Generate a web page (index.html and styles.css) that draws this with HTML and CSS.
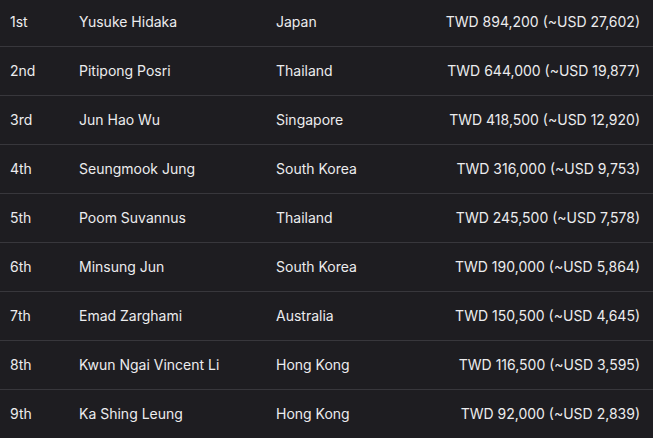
FILE: index.html
```html
<!DOCTYPE html>
<html lang="en">
<head>
<meta charset="utf-8">
<title>Results</title>
<link rel="stylesheet" href="styles.css">
</head>
<body>
<table class="results">
  <colgroup>
    <col class="c-rank">
    <col class="c-name">
    <col class="c-country">
    <col class="c-prize">
  </colgroup>
  <tbody>
    <tr><td>1st</td><td>Yusuke Hidaka</td><td>Japan</td><td class="prize">TWD 894,200 (~USD 27,602)</td></tr>
    <tr><td>2nd</td><td>Pitipong Posri</td><td>Thailand</td><td class="prize">TWD 644,000 (~USD 19,877)</td></tr>
    <tr><td>3rd</td><td>Jun Hao Wu</td><td>Singapore</td><td class="prize">TWD 418,500 (~USD 12,920)</td></tr>
    <tr><td>4th</td><td>Seungmook Jung</td><td>South Korea</td><td class="prize">TWD 316,000 (~USD 9,753)</td></tr>
    <tr><td>5th</td><td>Poom Suvannus</td><td>Thailand</td><td class="prize">TWD 245,500 (~USD 7,578)</td></tr>
    <tr><td>6th</td><td>Minsung Jun</td><td>South Korea</td><td class="prize">TWD 190,000 (~USD 5,864)</td></tr>
    <tr><td>7th</td><td>Emad Zarghami</td><td>Australia</td><td class="prize">TWD 150,500 (~USD 4,645)</td></tr>
    <tr><td>8th</td><td>Kwun Ngai Vincent Li</td><td>Hong Kong</td><td class="prize">TWD 116,500 (~USD 3,595)</td></tr>
    <tr><td>9th</td><td>Ka Shing Leung</td><td>Hong Kong</td><td class="prize">TWD 92,000 (~USD 2,839)</td></tr>
  </tbody>
</table>
</body>
</html>
```
FILE: styles.css
```css
html, body {
  margin: 0;
  padding: 0;
  background: #1e1d21;
  overflow: hidden;
}
body {
  font-family: Inter, "Liberation Sans", sans-serif;
  font-size: 14px;
  color: #ececee;
}
.results {
  width: 100%;
  border-collapse: collapse;
  table-layout: fixed;
  margin-top: -3px;
}
.c-rank { width: 69px; }
.c-name { width: 197px; }
.c-country { width: 150px; }
.results td {
  height: 49px;
  padding: 0 0 0 10px;
  box-sizing: border-box;
  vertical-align: middle;
  white-space: nowrap;
  border-bottom: 1px solid #38373c;
}
.results tr:last-child td { border-bottom: none; }
.results td.prize {
  text-align: right;
  padding-right: 13px;
}
```
